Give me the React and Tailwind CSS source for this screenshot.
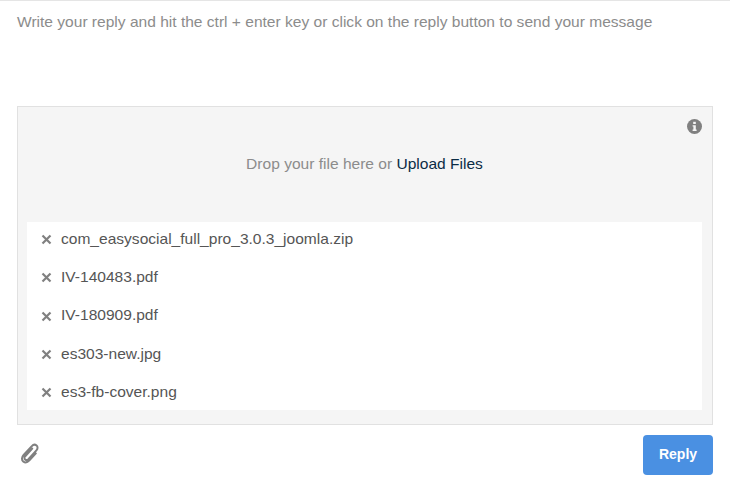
import React from "react";

const files = [
  "com_easysocial_full_pro_3.0.3_joomla.zip",
  "IV-140483.pdf",
  "IV-180909.pdf",
  "es303-new.jpg",
  "es3-fb-cover.png",
];

function X() {
  return (
    <svg width="11" height="11" viewBox="0 0 11 11" className="shrink-0">
      <path d="M1.5 1.5 L9.5 9.5 M9.5 1.5 L1.5 9.5" stroke="#808080" strokeWidth="2.2" fill="none" />
    </svg>
  );
}

function Info() {
  return (
    <svg width="15" height="15" viewBox="0 0 15 15">
      <circle cx="7.5" cy="7.5" r="7.5" fill="#808080" />
      <rect x="6.2" y="2.8" width="2.6" height="2.2" fill="#f5f5f5" />
      <path d="M5.6 6.2 H8.8 V10.6 H9.6 V12 H5.6 V10.6 H6.4 V7.6 H5.6 Z" fill="#f5f5f5" />
    </svg>
  );
}

function Clip() {
  return (
    <svg width="20" height="21" viewBox="0 0 20 21" fill="none">
      <path
        d="M12.2 5.6 L5.2 13.2 C4 14.6 4.4 16 5.2 16.6 C6.2 17.4 7.4 17.2 8.4 16.2 L16.4 7.4 C18 5.6 17.8 3.6 16.6 2.6 C15.2 1.4 13.2 1.6 11.8 3.2 L3.6 12 C1.4 14.4 1.6 17 3.2 18.4 C5 19.9 7.4 19.6 9.4 17.4 L15.8 10.4"
        stroke="#808080"
        strokeWidth="2"
        strokeLinecap="round"
      />
    </svg>
  );
}

export default function App() {
  return (
    <div className="w-[730px] h-[497px] bg-white border-t border-[#e5e5e5] px-[17px] font-['Liberation_Sans',Arial,sans-serif] overflow-hidden">
      <p className="h-[105px] pt-[11px] text-[15.55px] leading-[20px] text-[#8c8c8c] whitespace-nowrap">
        Write your reply and hit the ctrl + enter key or click on the reply button to send your message
      </p>
      <div className="w-[696px] h-[319px] border border-[#e1e1e1] bg-[#f5f5f5] flex flex-col pl-[9px] pr-[10px] pb-[14px]">
        <div className="flex justify-end pt-[12px] h-[47px]">
          <Info />
        </div>
        <div className="text-center text-[15.55px] leading-[20px] text-[#8c8c8c] h-[68px]">
          Drop your file here or <span className="text-[#0b2c45]">Upload Files</span>
        </div>
        <ul className="bg-white flex flex-col h-[188px]">
          {files.map((f) => (
            <li key={f} className="h-[38.25px] shrink-0 flex items-center pl-[14px] pb-[3px] gap-[9px] text-[15.55px] text-[#555555] whitespace-nowrap">
              <X />
              <span className="mb-[2px]">{f}</span>
            </li>
          ))}
        </ul>
      </div>
      <div className="flex items-start justify-between mt-[10px]">
        <div className="pl-[3px] pt-[8px]">
          <Clip />
        </div>
        <button className="w-[70px] h-[40px] pb-[2px] rounded-[4px] bg-[#4a90e2] text-white text-[14px] font-bold">
          Reply
        </button>
      </div>
    </div>
  );
}
